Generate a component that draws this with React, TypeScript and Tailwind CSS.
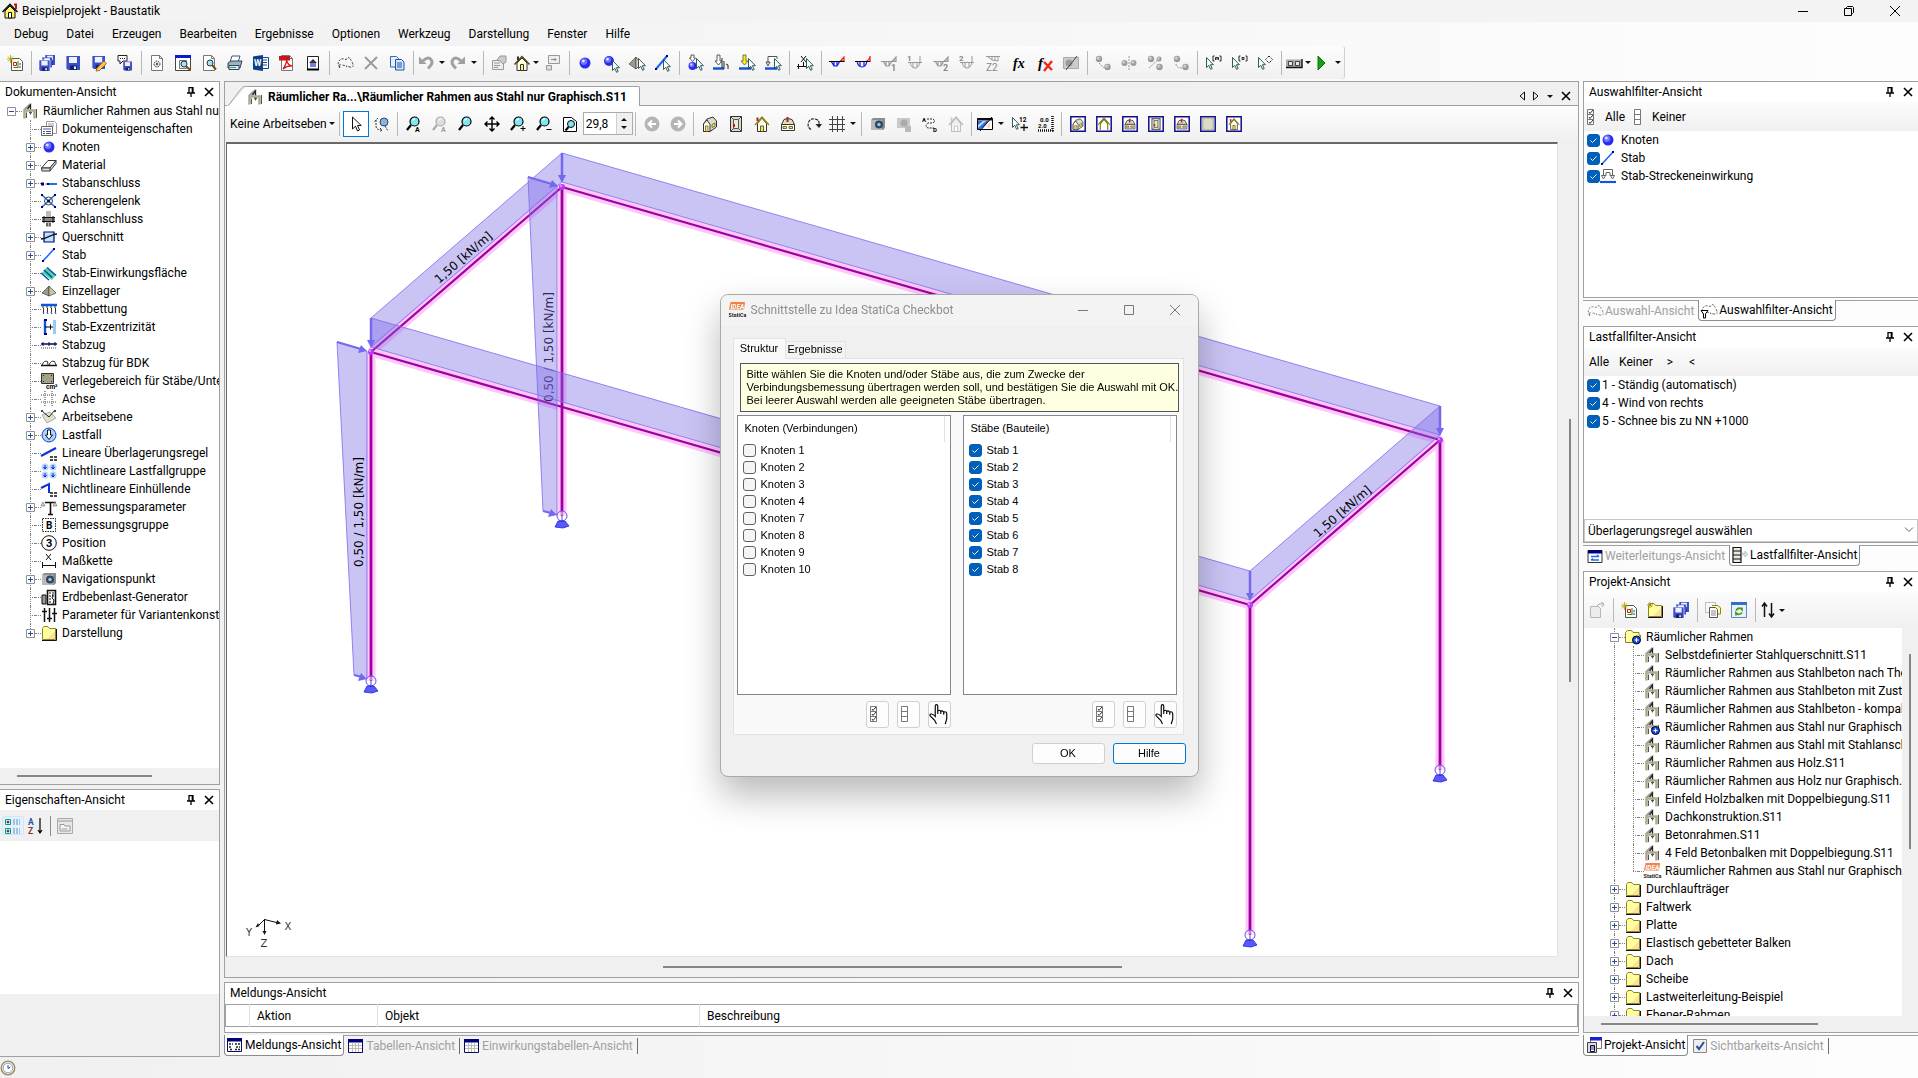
import { useState } from "react";
import type { ReactNode } from "react";

/* ---------- icon parts ---------- */

const Cursor = ({ x = 0, y = 0 }: { x?: number; y?: number }) => (
  <path
    transform={`translate(${x} ${y})`}
    d="M.5.5v10l2.300-2.200 1.800 4 1.600-.8-1.800-3.800h3z"
    fill="#fff"
    stroke="#164b4b"
    strokeWidth=".9"
  />
);

const Lens = ({ sign, off }: { sign?: ReactNode; off?: boolean }) => (
  <>
    <circle cx="8.500" cy="5.500" r="4.500" fill={off ? "#ddd" : "#7fe6f2"} stroke={off ? "#aaa" : "#000"} strokeWidth="1.200" />
    <path d="M6.500 4.500a2.500 2.500 0 0 1 2.500-1.500" stroke="#fff" strokeWidth="1.300" fill="none" />
    <path d="M5 9l-4 5" stroke={off ? "#aaa" : "#000"} strokeWidth="2.200" />
    {sign}
  </>
);

const Floppy = ({ x = 0, y = 0, s = 14 }: { x?: number; y?: number; s?: number }) => (
  <g transform={`translate(${x} ${y}) scale(${s / 14})`}>
    <path d="M0 0h14v14H2l-2-2z" fill="#3c4fc4" />
    <path d="M3 1h8v6H3z" fill="#eef1ff" />
    <path d="M4 9.500h7V14H4z" fill="#15206e" />
    <path d="M8 10.500h2V13H8z" fill="#fff" />
    <path d="M0 0h1v12H0z" fill="#8592ea" />
  </g>
);

const Ball = ({ x = 8, y = 8, r = 5.5, gray }: { x?: number; y?: number; r?: number; gray?: boolean }) => (
  <>
    <circle cx={x} cy={y} r={r} fill={gray ? "#9b9b9b" : "#2b2bf2"} />
    <circle cx={x - r * 0.2} cy={y - r * 0.25} r={r * 0.6} fill={gray ? "#b8b8b8" : "#6d74ff"} />
    <circle cx={x - r * 0.3} cy={y - r * 0.35} r={r * 0.25} fill="#e3e6ff" />
  </>
);

const Folder = () => (
  <>
    <path d="M1.500 14.500v-11l1.500-2h4l1.500 2h6v11z" fill="#ffffa0" stroke="#8c8428" />
    <path d="M6 14l8-8v8z" fill="#f7d59b" opacity=".7" />
    <path d="M1 15.500h14.500V4" stroke="#111" fill="none" />
  </>
);

const FrameModel = () => (
  <>
    <path d="M2 7L8.500 1" stroke="#9a9a9a" strokeWidth="2" fill="none" />
    <path d="M5.500 6L8.500 2v9" stroke="#222" strokeWidth="1.300" fill="none" />
    <path d="M2.500 15.500V7.500h10v8" stroke="#aeab93" strokeWidth="2.600" fill="none" />
    <path d="M4.500 15V9.500M14.500 15V6M8.500 9.500v2M7 9.500h3" stroke="#55534a" strokeWidth="1" />
  </>
);

const Page = ({ children }: { children?: ReactNode }) => (
  <>
    <path d="M2.500.5h8l3 3v12h-11z" fill="#fff" stroke="#777" />
    <path d="M10.500.5v3h3" fill="none" stroke="#777" />
    {children}
  </>
);

const House = ({ line = "#000", roof = "#000", off }: { line?: string; roof?: string; off?: boolean }) => (
  <>
    <path d="M3.500 15.500v-8L8 2l4.500 5.500v8z" fill={off ? "#f0f0f0" : "#fffde8"} stroke={line} />
    <path d="M1 9l7-8 7 8" fill="none" stroke={roof} strokeWidth="1.400" />
    <path d="M3.500 5V1.500" stroke={off ? "#ccc" : "#c01818"} strokeWidth="2" />
    <path d="M6.500 10h3v5.500h-3z" fill={off ? "#fff" : "#ffec3a"} stroke={line} strokeWidth=".8" />
  </>
);

const SideHouse = () => (
  <>
    <path d="M1.500 8.500L4 3.500q4-2 8 0l2.500 5z" fill="#dddbc8" stroke="#333" />
    <path d="M1.500 8.500h13v6h-13z" fill="#fffef0" stroke="#333" />
    <path d="M3 10.500h3.500v2H3zM9 10.500h3.500v2H9z" fill="#ffe93a" stroke="#333" strokeWidth=".7" />
    <path d="M6.500 1h2v5h-2z" fill="#b02020" />
  </>
);

const TopHouse = () => (
  <>
    <path d="M2.500.5h11v15h-11z" fill="#dddbc8" stroke="#333" />
    <path d="M5.500 3.500h5v9h-5zM2.500.5l3 3M13.500.5l-3 3M2.500 15.500l3-3M13.500 15.500l-3-3" fill="#eceadb" stroke="#555" />
    <path d="M5 8h2v3H5z" fill="#b02020" />
  </>
);

const IsoHouse = () => (
  <>
    <path d="M1.500 8L5 3l6-2 3.500 4v6L8 15.500H1.500z" fill="#dddbc8" stroke="#333" />
    <path d="M1.500 8L5 4l3 4.500v7H1.500z" fill="#fffef0" stroke="#333" />
    <path d="M3.500 10h2.500v5.500H3.500zM10 8.500l3-1.500v3l-3 1.500z" fill="#ffe93a" stroke="#333" strokeWidth=".6" />
  </>
);

const Boxed = ({ children }: { children?: ReactNode }) => (
  <>
    <path d="M.8.8h14.400v14.400H.8z" fill="#fff" stroke="#10108c" strokeWidth="1.500" />
    <g transform="translate(2 2) scale(.75)">{children}</g>
  </>
);

const Grid = ({ color = "#777" }: { color?: string }) => (
  <path d="M3.500 0v16M8.500 0v16M13.500 0v16M0 3.500h16M0 8.500h16M0 13.500h16" stroke={color} />
);

const Cables = ({ label, off }: { label?: string; off?: boolean }) => (
  <>
    <path d="M2 6l3 5h3l3-5M5 6v5M8 6v5" fill="none" stroke={off ? "#999" : "#0a16e0"} strokeWidth="1.200" />
    <path d="M11.500 6L15 2v4z" fill="none" stroke={off ? "#999" : "#f01818"} strokeWidth="1.200" />
    <path d="M0 6.500h15.500" stroke={off ? "#999" : "#000"} />
    {label && (
      <text x="10" y="15.500" fontSize="9" fontWeight="700" fill="#888">
        {label}
      </text>
    )}
  </>
);

const BallPair = ({ mid }: { mid: string }) => (
  <>
    <Ball x={4} y={4} r={3.2} gray />
    <Ball x={12.5} y={12} r={3.2} gray />
    <path d={mid} stroke="#999" fill="none" strokeDasharray="2 1" />
  </>
);

const Idea = () => (
  <>
    <path d="M1.500 0H16l-1 7.500H0z" fill="#f0834a" />
    <text x="1.500" y="6.500" fontSize="6.500" fontWeight="700" fill="#fff" fontStyle="italic">IDEA</text>
    <text x="-.5" y="14.500" fontSize="5.500" fontWeight="700" fill="#222">StatiCa</text>
  </>
);

const Checklist = ({ marks }: { marks?: boolean }) => (
  <>
    <path d="M1.500.5h6v15h-6zM1.500 5.500h6M1.500 10.500h6" fill="#fff" stroke="#777" />
    {marks && <path d="M3 3l1 1.500L7 1M3 8l1 1.500L7 6M3 13l1 1.500L7 11" stroke="#333" fill="none" />}
  </>
);

const Lasso = () => (
  <path d="M3 12q-3-3-1-6t5-2 4-1 4 4-2 5-4-1-4-1-2 3" fill="none" stroke="#333" strokeDasharray="2 1.300" />
);

const WindowGrid = ({ dots }: { dots?: boolean }) => (
  <>
    <path d="M.5 1.500h14v13H.5z" fill="#fff" stroke="#0b0b5c" />
    <path d="M0 1h15v3.500H0z" fill="#00007b" />
    {dots ? (
      <path d="M2 7h4M8 7h5M2 10h3M9 10h4M3 12.500h3M8 12.500h5" stroke="#222" strokeWidth="1.600" strokeDasharray="2 1" />
    ) : (
      <path d="M4.500 5v9M7.500 5v9M10.500 5v9M1 7.500h13M1 10.500h13" stroke="#bbb" />
    )}
  </>
);

const icons: Record<string, ReactNode> = {
  app: (
    <>
      <path d="M3 15V8l5-5 5 5v7z" fill="#fff36b" stroke="#111" />
      <path d="M.5 9L8 1.500 15.500 9" fill="none" stroke="#111" strokeWidth="1.600" />
      <path d="M12 1.500h2V6" stroke="#d01010" strokeWidth="2" fill="none" />
      <path d="M6.500 9.500h3V15h-3z" fill="#fff" stroke="#111" />
    </>
  ),
  newDoc: (
    <>
      <path d="M4.500 3.500h8l3 3v9h-11z" fill="#fffff0" stroke="#555" />
      <path d="M6.500 7.500h3v3h-3z" fill="#fff" stroke="#e01010" />
      <path d="M11 6v6M6.500 12.500h5" stroke="#1a8f1a" />
      <path d="M0 4h7M3.500 0v8M1 1.500l5 5M6 1.500l-5 5" stroke="#b5a900" strokeWidth=".9" />
      <path d="M12 9h2M12 12h2" stroke="#2a2ae0" />
    </>
  ),
  saveAll: (
    <>
      <Floppy x={6} y={0} s={10} />
      <Floppy x={3} y={2.5} s={10} />
      <Floppy x={0} y={5} s={11} />
      <path d="M0 5h11M11 5v11" stroke="#fff" strokeWidth=".6" />
    </>
  ),
  save: <Floppy x={1} y={1} />,
  saveEdit: (
    <>
      <Floppy x={1} y={1} s={13} />
      <path d="M6 13l7-7 2.500 2.500-7 7L5 16z" fill="#ffc24a" stroke="#8a5a10" strokeWidth=".8" />
    </>
  ),
  saveNote: (
    <>
      <path d="M1 .5h9v5.500H6l-3 3V6H1z" fill="#fff" stroke="#222" />
      <path d="M3 3.500h5" stroke="#222" strokeDasharray="1 1" />
      <Floppy x={6} y={6.5} s={9} />
    </>
  ),
  docGear: (
    <Page>
      <circle cx="8" cy="9" r="3" fill="#ddd" stroke="#333" strokeDasharray="1.500 1" />
      <circle cx="8" cy="9" r="1" fill="#333" />
    </Page>
  ),
  preview: (
    <>
      <path d="M.5.5h15v15H.5z" fill="#fff" stroke="#444" />
      <path d="M0 0h16v3H0z" fill="#0b17d4" />
      <path d="M4.500 5.500h7v8h-7z" fill="#eee" stroke="#777" />
      <circle cx="9" cy="9" r="3" fill="#a6e3f0" stroke="#234" />
      <path d="M11 11l4 4" stroke="#7a4d10" strokeWidth="2" />
    </>
  ),
  docFind: (
    <Page>
      <circle cx="9" cy="8" r="3" fill="#a6e3f0" stroke="#234" />
      <path d="M11 10l4 4.500" stroke="#7a4d10" strokeWidth="2" />
    </Page>
  ),
  print: (
    <>
      <path d="M5 1h8l-2 6H3z" fill="#fff" stroke="#456" />
      <path d="M1 8l3-2h11l-2 7H1z" fill="#9db4c0" stroke="#345" />
      <path d="M2 10.500h10v4H2z" fill="#e7eef2" stroke="#345" />
      <path d="M3 12.500h6" stroke="#1ba39b" />
    </>
  ),
  word: (
    <>
      <path d="M8 2.500h7.500v11H8z" fill="#fff" stroke="#124b8e" />
      <path d="M9 5h5M9 7.500h5M9 10h5" stroke="#124b8e" />
      <path d="M0 1.500L10 0v16L0 14.500z" fill="#0c3f86" />
      <text x="1" y="11" fontSize="8.500" fontWeight="700" fill="#fff">W</text>
    </>
  ),
  pdf: (
    <Page>
      <path d="M0 1h11v4.500H0z" fill="#c8141b" />
      <path d="M4 14q4-6 3.500-9Q9 11 14 11q-6-.5-10 3z" fill="none" stroke="#d11" strokeWidth="1.200" />
    </Page>
  ),
  housePage: (
    <>
      <path d="M2.500 1.500h11v13h-11z" fill="#fff" stroke="#222" />
      <path d="M4 8l4-4 4 4z" fill="#333" />
      <path d="M5 8h6v4H5z" fill="#7780e0" />
      <path d="M2 14.500h12" stroke="#000" strokeWidth="2" />
    </>
  ),
  lasso: <Lasso />,
  remove: <path d="M2 2l12 12M14 2L2 14" stroke="#999" strokeWidth="1.800" />,
  copy: (
    <>
      <path d="M1.500 1.500h6l2.500 2.500v8H1.500z" fill="#e5f0ff" stroke="#3666b5" />
      <path d="M6.500 4.500h6l2.500 2.500v8H6.500z" fill="#d4e5ff" stroke="#2352a5" />
      <path d="M8 8h5M8 10h5M8 12h5" stroke="#2352a5" />
    </>
  ),
  undo: (
    <>
      <path d="M5 6q5-5 8-1.500t-3 9" fill="none" stroke="#a0a0a0" strokeWidth="3" />
      <path d="M1 1.500V9h7.500z" fill="#a0a0a0" />
    </>
  ),
  redo: (
    <>
      <path d="M11 6Q6 1 3 4.500t3 9" fill="none" stroke="#a0a0a0" strokeWidth="3" />
      <path d="M15 1.500V9H7.500z" fill="#a0a0a0" />
    </>
  ),
  props: (
    <>
      <path d="M1.500 5.500h11v9h-11z" fill="#eee" stroke="#999" />
      <path d="M3 8h6M3 10.500h6M3 12.500h4" stroke="#999" />
      <path d="M6 5l3-4h6v6l-3 2-3-3z" fill="#ccc" stroke="#999" />
    </>
  ),
  homeOlive: (
    <>
      <path d="M3 15.500V8l5-5 5 5v7.500z" fill="#fffee6" stroke="#333" />
      <path d="M.5 9.500L8 1.500l7.500 8" fill="none" stroke="#4a4a10" strokeWidth="1.500" />
      <path d="M4 5V1.500" stroke="#333" strokeWidth="2" />
      <path d="M6.500 9.500h3v6h-3z" fill="#fff36b" stroke="#333" />
    </>
  ),
  winMini: (
    <>
      <path d="M3.500.5h11v8h-11z" fill="#eee" stroke="#999" />
      <path d="M6 4.500h5M9.500 3l1.500 1.500L9.500 6" stroke="#888" fill="none" />
      <path d="M1.500 10.500h5v4.500h-5z" fill="#ddd" stroke="#999" />
    </>
  ),
  ball: <Ball />,
  ballCursor: (
    <>
      <Ball x={6} y={6} r={5} />
      <Cursor x={9} y={5} />
    </>
  ),
  pyramid: (
    <>
      <path d="M0 9L7 2v12z" fill="#9c9b8c" stroke="#444" strokeWidth=".7" />
      <path d="M7 2l5 7-5 5z" fill="#d9d7b8" stroke="#444" strokeWidth=".7" />
      <Cursor x={9} y={3} />
    </>
  ),
  lineCursor: (
    <>
      <path d="M1 14L12 1" stroke="#1565ff" strokeWidth="2" />
      <path d="M0 13h2v2H0zM11 0h2v2h-2z" fill="#000080" />
      <Cursor x={8} y={4} />
    </>
  ),
  nodeLoad: (
    <>
      <path d="M4 0h3v3h1.500L5.500 6.500 2.500 3H4z" fill="#fff" stroke="#333" strokeWidth=".8" />
      <Ball x={5.5} y={11} r={4} />
      <Cursor x={9} y={3} />
    </>
  ),
  barLoad: (
    <>
      <path d="M4 0h3v6h2L5.500 10 2 6h2z" fill="#fff" stroke="#333" strokeWidth=".8" />
      <path d="M0 13.500h11" stroke="#1455d8" strokeWidth="2.500" />
      <path d="M9 3v10M11 6v8M13 9l2 1v4" stroke="#222" fill="none" />
    </>
  ),
  yellowLoad: (
    <>
      <path d="M4 0h3v6h2L5.500 10 2 6h2z" fill="#fff000" stroke="#555" strokeWidth=".8" />
      <path d="M0 13.500h12" stroke="#1455d8" strokeWidth="2.500" />
      <Cursor x={9} y={3} />
    </>
  ),
  lineLoad: (
    <>
      <path d="M3 8V1.500h9V4M1 7h4l-2 4z" fill="#fff" stroke="#555" />
      <path d="M0 13.500h12" stroke="#1455d8" strokeWidth="2.500" />
      <Cursor x={9} y={3} />
    </>
  ),
  dimCursor: (
    <>
      <path d="M0 11.500h12M1.500 9v5M4 1l5 6M9 1L4 7M6.500 7v4" stroke="#111" fill="none" />
      <Cursor x={9} y={3} />
    </>
  ),
  resA: <Cables />,
  resB: (
    <>
      <path d="M2 6q1 6 5 6t5-6M5 6v5M9 6v5" fill="none" stroke="#0a16e0" strokeWidth="1.200" />
      <path d="M11.500 6q3-1 3.500-5v5" fill="none" stroke="#f01818" strokeWidth="1.200" />
      <path d="M0 6.500h15.500" stroke="#000" />
    </>
  ),
  res1: <Cables label="1" off />,
  res1b: (
    <>
      <path d="M3 7q1 6 5 6t5-6V1M6 7v5M10 7v5M1 7.500h14" fill="none" stroke="#999" />
      <text x="0" y="6" fontSize="8" fontWeight="700" fill="#888">1</text>
    </>
  ),
  res2: <Cables label="2" off />,
  res2b: (
    <>
      <path d="M3 7q1 6 5 6t5-6V1M6 7v5M10 7v5M1 7.500h14" fill="none" stroke="#999" />
      <text x="0" y="6" fontSize="8" fontWeight="700" fill="#888">2</text>
    </>
  ),
  resZ: (
    <>
      <path d="M1 1.500h14M3 2l4 3 6 1V2M7 2v3M10 2v4" stroke="#999" fill="none" />
      <text x="1" y="15.500" fontSize="10" fill="#888">Z2</text>
    </>
  ),
  fx: <text x="2" y="12.500" fontSize="14" fontStyle="italic" fontWeight="700" fontFamily="Liberation Serif, serif">fx</text>,
  fxOff: (
    <>
      <text x="1" y="12.500" fontSize="15" fontStyle="italic" fontWeight="700" fontFamily="Liberation Serif, serif">f</text>
      <path d="M7 7l8 8M15 6l-8 10" stroke="#f02818" strokeWidth="2.400" />
    </>
  ),
  grayWin: (
    <>
      <path d="M.5 2.500h15v11H.5z" fill="#ccc" stroke="#aaa" />
      <circle cx="6" cy="8" r="3.500" fill="#999" />
      <path d="M3 15L14 1" stroke="#444" />
    </>
  ),
  pairA: <BallPair mid="M4 8l5 5" />,
  pairB: (
    <>
      <Ball x={3.5} y={8} r={3} gray />
      <Ball x={12.5} y={8} r={3} gray />
      <path d="M8 1v14" stroke="#999" strokeDasharray="2 1" />
    </>
  ),
  pairC: (
    <>
      <BallPair mid="M2 13L14 2" />
      <Ball x={12} y={4} r={2.5} gray />
    </>
  ),
  pairD: <BallPair mid="M3 9q0 4 6 4" />,
  pickM: (
    <>
      <Cursor x={1} y={2} />
      <path d="M9.500 1h-1.500v5h1.500M14.500 1H16v5h-1.500M10.500 5V2.500h3V5M12 3v2" stroke="#111" fill="none" strokeWidth=".9" />
    </>
  ),
  pickO: (
    <>
      <Cursor x={1} y={2} />
      <path d="M9.500 1h-1.500v5h1.500M14.500 1H16v5h-1.500M11 2.500h2v2h-2z" stroke="#111" fill="none" strokeWidth=".9" />
    </>
  ),
  pickD: (
    <>
      <Cursor x={1} y={2} />
      <path d="M12 1l3.500 3.500L12 8 8.500 4.500z" stroke="#222" fill="none" strokeDasharray="1.500 .8" />
    </>
  ),
  boxes: (
    <>
      <path d="M0 4.500h16v8H0z" fill="#aaa" />
      <path d="M2.500 6.500h4v4h-4zM9.500 6.500h4v4h-4z" fill="#e8e8e8" stroke="#222" strokeWidth=".8" />
      <path d="M0 12.500h16V4" stroke="#111" strokeWidth="1.400" fill="none" />
    </>
  ),
  play: <path d="M4 1l7 7-7 7z" fill="#18a018" stroke="#0a700a" />,
  pointer: (
    <path d="M4.500 1v12l3-2.800 2 4.800 2-1-2-4.500h3.700z" fill="#fff" stroke="#111" />
  ),
  orbit: (
    <>
      <circle cx="10" cy="6" r="4" fill="#8ab4e8" stroke="#345" />
      <path d="M11 10l3 5M2 4v6q0 4 6 4M6 12l2 2-2 2M4 2L2 4 0 6" stroke="#333" fill="none" strokeDasharray="2 1" />
    </>
  ),
  zoomA: <Lens sign={<text x="9" y="15.500" fontSize="7" fontWeight="700">A</text>} />,
  zoomAOff: <Lens off sign={<text x="9" y="15.500" fontSize="7" fontWeight="700" fill="#999">A</text>} />,
  zoom: <Lens />,
  pan: (
    <path d="M8 1v14M1 8h14M5.500 3.500L8 1l2.500 2.500M5.500 12.500L8 15l2.500-2.500M3.500 5.500L1 8l2.500 2.500M12.500 5.500L15 8l-2.500 2.500" fill="none" stroke="#000" strokeWidth="1.400" />
  ),
  zoomIn: <Lens sign={<path d="M13 10v5M10.500 12.500h5" stroke="#000" />} />,
  zoomOut: <Lens sign={<path d="M10.500 13.500h5" stroke="#000" />} />,
  zoomPage: (
    <>
      <path d="M1.500 1.500h8l5 4v10h-13z" fill="#fff" stroke="#000" />
      <circle cx="9" cy="8" r="3.500" fill="#7fe6f2" stroke="#000" />
      <path d="M6.500 11l-3 3.500" stroke="#000" strokeWidth="2" />
    </>
  ),
  back: (
    <>
      <circle cx="8" cy="8" r="7.500" fill="#b5b5b5" />
      <path d="M12 8H5M8 4.500L4.500 8 8 11.500" stroke="#fff" strokeWidth="2" fill="none" />
    </>
  ),
  forward: (
    <>
      <circle cx="8" cy="8" r="7.500" fill="#b5b5b5" />
      <path d="M4 8h7M8 4.500L11.500 8 8 11.500" stroke="#fff" strokeWidth="2" fill="none" />
    </>
  ),
  iso: <IsoHouse />,
  top: <TopHouse />,
  house: <House line="#333" roof="#8f8b10" />,
  side: <SideHouse />,
  rotate: (
    <>
      <path d="M5 13.500Q1 11 2.500 6.500T9 3t4 6" fill="none" stroke="#222" strokeWidth="1.200" strokeDasharray="3 1" />
      <path d="M9.500 8h6.500l-3 4z" fill="#222" />
    </>
  ),
  grid: <Grid color="#444" />,
  camera: (
    <>
      <path d="M1 4l2-2h12v10l-2 2H1z" fill="#8d8d8d" />
      <path d="M1 4h11v10H1z" fill="#b9b9b9" />
      <circle cx="9" cy="8.500" r="4" fill="#2e4760" />
      <circle cx="9" cy="8.500" r="1.700" fill="#9fc6e6" />
    </>
  ),
  cameraOff: (
    <>
      <path d="M1 2h13v10H1z" fill="#c9c9c9" />
      <circle cx="8" cy="7" r="3.500" fill="#aaa" />
      <path d="M9 10h6v6H9z" fill="#b9b9b9" />
    </>
  ),
  route: (
    <>
      <path d="M5 3h6q3 2 0 4H6q-4 3 0 5h6" fill="none" stroke="#222" strokeDasharray="2 1" />
      <text x="0" y="5.500" fontSize="6" fontWeight="700">A</text>
      <text x="11" y="15.500" fontSize="6" fontWeight="700">D</text>
    </>
  ),
  houseOff: <House off line="#bbb" roof="#bbb" />,
  planeView: (
    <>
      <path d="M.5 2.500h15v11H.5z" fill="#fff" stroke="#000" />
      <path d="M1 5h11L7 10.500 4 13H1z" fill="#2a6fe8" />
      <path d="M1 9l5-4h3l-8 7z" fill="#bcd8ff" />
      <path d="M0 3.500h16" stroke="#111" strokeWidth="2" />
      <path d="M3 15L15 1" stroke="#000" />
      <path d="M9 11l4-5v6z" fill="#f3d9c0" />
    </>
  ),
  pick12: (
    <>
      <Cursor x={0} y={1} />
      <text x="7" y="6" fontSize="6.500" fontWeight="700">12</text>
      <path d="M12 8v7M8.500 11.500H16" stroke="#111" strokeWidth="1.300" />
    </>
  ),
  ruler: (
    <>
      <text x="2" y="5.500" fontSize="6" fontWeight="700">0.0</text>
      <text x="0" y="12" fontSize="6" fontWeight="700">2.0</text>
      <path d="M14.500 0v14.500H0" fill="none" stroke="#111" strokeWidth="2.500" strokeDasharray="1 1" />
    </>
  ),
  vIso: <Boxed><IsoHouse /></Boxed>,
  vFront: <Boxed><path d="M3 16V8l5-6 5 6v8M0 9l8-9 8 9" fill="#fff" stroke="#7d7a10" strokeWidth="1.500" /></Boxed>,
  vSide: <Boxed><SideHouse /></Boxed>,
  vTop: <Boxed><TopHouse /></Boxed>,
  vSide2: <Boxed><SideHouse /></Boxed>,
  vBlank: <Boxed><path d="M1 0h14v16H1z" fill="#dddbc8" stroke="#8a8978" /></Boxed>,
  vHouse: <Boxed><House line="#333" roof="#7d7a10" /></Boxed>,
  frame: <FrameModel />,
  frameActive: (
    <>
      <FrameModel />
      <circle cx="11.500" cy="11.500" r="4" fill="#1b4ff0" stroke="#000" />
      <path d="M9.500 11.500h4M11.500 9.500v4" stroke="#fff" />
    </>
  ),
  idea: <Idea />,
  folder: <Folder />,
  folderActive: (
    <>
      <path d="M.5 13.500v-10l2-2h4l1.500 2h6v3H16l-3 7z" fill="#ffff9c" stroke="#8c8428" />
      <circle cx="11.500" cy="11" r="4" fill="#1b4ff0" stroke="#000" />
      <path d="M9.500 11h4M11.500 9v4" stroke="#fff" />
    </>
  ),
  docProps: (
    <>
      <path d="M5.500.5h8l2 2v10h-10z" fill="#fff" stroke="#999" />
      <path d="M7 3h6M7 5h6" stroke="#999" />
      <path d="M.5 5.500h11v9H.5z" fill="#fff" stroke="#666" />
      <path d="M2 8h8M2 10.500h2M5 10.500h5M2 12.500h2M5 12.500h5" stroke="#4a5a90" />
    </>
  ),
  eraser: (
    <>
      <path d="M.5 11L7 3.500h8L9 11z" fill="#fff" stroke="#333" />
      <path d="M.5 11h8.500v3H1zM9 11l6-7.500v3L9 14" fill="#ddd" stroke="#333" />
    </>
  ),
  joint: (
    <>
      <path d="M6 9h10" stroke="#1278e8" strokeWidth="2" />
      <path d="M0 7.500h3v3H0zM4.500 8.500h1v1h-1zM6 8h2v2H6z" fill="#00006e" />
    </>
  ),
  scissor: (
    <>
      <path d="M1 2l13 12M14 2L1 14" stroke="#1a6fe0" strokeWidth="1.500" />
      <circle cx="7.500" cy="8" r="4" fill="none" stroke="#444" />
      <circle cx="7.500" cy="8" r="1.500" fill="#111" />
      <path d="M0 1h2v2H0zM13 1h2v2h-2zM0 13h2v2H0zM13 13h2v2h-2z" fill="#00006e" />
    </>
  ),
  steelJoint: (
    <>
      <path d="M5 0h5v16H5z" fill="#bbb" />
      <path d="M1 6.500h13v4H1z" fill="#888" />
      <path d="M1 6.500h13M1 10.500h13M3 5v7M12 5v7M6 12v3M9 12v3" stroke="#111" />
    </>
  ),
  section: (
    <>
      <path d="M3 3h10v10H3z" fill="#bfe2fb" stroke="#00007b" strokeWidth="1.200" />
      <path d="M0 10l3-.5 10-4 3-.5" stroke="#111" fill="none" strokeWidth="1.300" />
    </>
  ),
  bar: (
    <>
      <path d="M2 14L13 2" stroke="#1565ff" strokeWidth="1.500" />
      <path d="M1 13h2v2H1zM12 1h2v2h-2z" fill="#000080" />
    </>
  ),
  loadArea: (
    <>
      <path d="M1 8l4-5 10 7-4 5z" fill="#46dba0" />
      <path d="M0 8l8 7M3 5l8 7.500M6 2.500l9 8" stroke="#1244b0" strokeWidth="1.500" />
    </>
  ),
  support: (
    <>
      <path d="M1 10L8 3v10z" fill="#9c9b8c" stroke="#444" strokeWidth=".7" />
      <path d="M8 3l7 7-7 3z" fill="#c9c6a0" stroke="#444" strokeWidth=".7" />
    </>
  ),
  bedding: (
    <>
      <path d="M0 4h16" stroke="#1256d8" strokeWidth="2.500" />
      <path d="M2 5v2l1 1-1 1 1 1-1 1 1 2M6 5v2l1 1-1 1 1 1-1 1 1 2M10 5v2l1 1-1 1 1 1-1 1 1 2M14 5v2l1 1-1 1 1 1-1 1 1 2" stroke="#333" fill="none" />
    </>
  ),
  eccentric: (
    <>
      <path d="M4 1v14" stroke="#1256d8" strokeWidth="2.400" />
      <path d="M12 1h3v14h-3z" fill="#9cc8f4" />
      <path d="M4 8h8M9.500 5.500v5" stroke="#000" />
      <path d="M3 0h3v2H3zM3 14h3v2H3z" fill="#00006e" />
    </>
  ),
  barChain: (
    <>
      <path d="M0 7h16" stroke="#00007b" strokeWidth="1.500" />
      <path d="M2 5v4M8 5v4M14 5v4" stroke="#111" />
      <path d="M0 11h16" stroke="#888" strokeWidth="1.500" strokeDasharray="1 1" />
    </>
  ),
  barChainBdk: (
    <>
      <path d="M0 10.500h16" stroke="#111" strokeWidth="1.500" />
      <path d="M1 10q2-5 5.500-3.500L7 10M8 10q2-5 5.500-3.500L15 10" stroke="#333" fill="none" />
    </>
  ),
  layArea: (
    <>
      <path d="M.5.5h12v10H.5z" fill="#a3a38a" stroke="#333" />
      <path d="M2 2h1v1H2zM10 2h1v1h-1zM2 8h1v1H2zM10 8h1v1h-1z" fill="#222" />
      <text x="5" y="16" fontSize="6.500" fontWeight="700">cm²</text>
    </>
  ),
  axis: (
    <path d="M4 0v16M11 0v16M0 4h16M0 11h16" fill="none" stroke="#888" strokeWidth="1.600" strokeDasharray="1 1" />
  ),
  workPlane: (
    <>
      <path d="M1 6l8-3 6 6-9 5z" fill="#e2e0cc" stroke="#aaa" />
      <path d="M1 2l7 6 6-7" fill="none" stroke="#222" />
      <path d="M0 1h2v2H0zM13 1h2v2h-2z" fill="#444" />
    </>
  ),
  loadCase: (
    <>
      <circle cx="8" cy="8" r="7" fill="#a8d4fa" stroke="#1440d8" />
      <path d="M6.500 3h3v5h2L8 12.500 4.500 8h2z" fill="#fff" stroke="#111" />
    </>
  ),
  linearRule: (
    <>
      <path d="M0 11L15 3" stroke="#1030e0" strokeWidth="2" />
      <path d="M9 12h3M13 12h3M9 15h3M13 15h3" stroke="#111" strokeWidth="1.500" />
    </>
  ),
  caseGroup: (
    <>
      <circle cx="4" cy="4" r="3.500" fill="#b4d6fa" />
      <circle cx="12" cy="4" r="3.500" fill="#b4d6fa" />
      <circle cx="4" cy="12" r="3.500" fill="#b4d6fa" />
      <circle cx="12" cy="12" r="3.500" fill="#b4d6fa" />
      <path d="M4 2v4M12 2v4M4 10v4M12 10v4M2.500 4L4 6l1.500-2M10.500 4L12 6l1.500-2M2.500 12L4 14l1.500-2M10.500 12l1.500 2 1.500-2" fill="none" stroke="#1020d0" />
    </>
  ),
  envelope: (
    <>
      <path d="M0 7l8-4v9" fill="none" stroke="#1030e0" strokeWidth="2" />
      <path d="M9 12h3M13 12h3M9 15h3M13 15h3" stroke="#111" strokeWidth="1.500" />
    </>
  ),
  scale: (
    <>
      <path d="M4 3.500h11M9.500 3v12M7 15.500h5" stroke="#111" strokeWidth="1.600" />
      <path d="M0 7l2-4 2 4zM12 7l2-4 2 4z" fill="#ddd8b0" stroke="#777" strokeWidth=".7" />
    </>
  ),
  groupB: (
    <>
      <path d="M1.500 1.500h13v13h-13z" fill="#fff" stroke="#222" strokeDasharray="1.500 1" />
      <text x="5" y="12" fontSize="10" fontWeight="700">B</text>
    </>
  ),
  position: (
    <>
      <circle cx="8" cy="8" r="7.300" fill="#fff" stroke="#111" />
      <text x="5" y="12" fontSize="11" fontWeight="700">3</text>
    </>
  ),
  dimChain: <path d="M1 12.500h14M1.500 9v6M14.500 9v6M5 1l5 6M10 1L5 7" fill="none" stroke="#111" />,
  quake: (
    <>
      <path d="M6.500 1.500h8v14h-8z" fill="#fff" stroke="#111" strokeWidth="1.600" />
      <path d="M1 6h4v9H1zM8 4h2M11 4h2M8 7h2M11 7h2M8 10h2M8 13h2" fill="#999" stroke="#111" />
      <path d="M12 5l-1 4 2 2-1 4" stroke="#111" fill="none" />
    </>
  ),
  sliders: <path d="M3.500 1v14M8.500 1v14M13.500 1v14M1 4.500h5M6 11.500h5M11 6.500h5" stroke="#111" strokeWidth="1.500" />,
  catView: (
    <>
      <path d="M.5 1.500h5v5h-5zM.5 10.500h5v5h-5z" fill="#fff" stroke="#0a9a86" />
      <path d="M1.500 4h3M3 2.500v3M1.500 13h3M3 11.500v3" stroke="#111" />
      <path d="M8 2h7M8 4h7M8 6h7M8 11h7M8 13h7M8 15h7" stroke="#5c93c8" strokeDasharray="2 1" />
    </>
  ),
  sortAz: (
    <>
      <text x="0" y="7" fontSize="8.500" fontWeight="700" fill="#1b58b8">A</text>
      <text x="0" y="16" fontSize="8.500" fontWeight="700" fill="#8b3030">Z</text>
      <path d="M12 0v14M10 12l2 3 2-3" stroke="#000" fill="none" strokeWidth="1.200" />
    </>
  ),
  propPages: (
    <>
      <path d="M.5.5h15v15H.5z" fill="#e6e6e6" stroke="#aaa" />
      <path d="M1 3h14M3 6.500h4l1 1.500h5v5H3z" stroke="#999" fill="#f5f5f5" />
      <path d="M4.500 11h6" stroke="#999" />
    </>
  ),
  msgTab: <WindowGrid dots />,
  tableTab: <WindowGrid />,
  all: <Checklist marks />,
  none: <Checklist />,
  barLineLoad: (
    <>
      <path d="M3.500 8V1.500h9V8M1.500 7.500h4L3.500 11zM10.500 7.500h4l-2 3.500zM6 8V4.500h4V8" fill="#fff" stroke="#666" />
      <path d="M0 14h16" stroke="#1456d8" strokeWidth="2.200" />
    </>
  ),
  lassoTab: <g opacity=".6"><Lasso /></g>,
  lassoFilter: (
    <>
      <g opacity=".8"><Lasso /></g>
      <path d="M0 8.500h7L4.500 12v4h-2v-4z" fill="#fff" stroke="#000" />
    </>
  ),
  forwardTab: (
    <>
      <path d="M1 2.500h14v12H1z" fill="#fff" stroke="#333" />
      <path d="M1 2h14v3.500H1z" fill="#00007b" />
      <path d="M4 8.500h8M10 7l2 1.500M12 12H4M6 10.500L4 12" stroke="#1a6fe8" strokeWidth="1.400" fill="none" />
    </>
  ),
  caseTab: (
    <>
      <path d="M1 .5h8v15H1zM1 4h8M1 8h8M1 12h8" fill="#eceadb" stroke="#111" strokeWidth="1.200" />
      <path d="M10 6h3V4l3 3-3 3V8h-3z" fill="#cfe6e6" stroke="#9bb" strokeWidth=".6" />
    </>
  ),
  projTab: (
    <>
      <path d="M4.500.5h11v11h-11z" fill="#fff" stroke="#777" />
      <path d="M4 0h12v3.500H4z" fill="#1624d0" />
      <path d="M1.500 5.500h9v10h-9z" fill="#ddd" stroke="#444" />
      <path d="M4.500 8.500h4v6h-4z" fill="#fff" stroke="#111" />
      <path d="M5 10h3M5 12h3" stroke="#1624d0" />
    </>
  ),
  checkTab: (
    <>
      <path d="M1.500 1.500h13v13h-13z" fill="#eee" stroke="#888" />
      <path d="M4.500 8l2.500 3 5-7" stroke="#2b4f9e" strokeWidth="2" fill="none" />
    </>
  ),
  exportOff: (
    <>
      <path d="M1.500 4.500h8l2 2v9h-10z" fill="#ececec" stroke="#b5b5b5" />
      <path d="M8 4q1-3 6-2M12 0l3 2-2 3" fill="none" stroke="#aaa" />
    </>
  ),
  newFolder: (
    <>
      <Folder />
      <path d="M0 3h6M3 0v6M1 1l4 4M5 1L1 5" stroke="#9a8f00" strokeWidth=".8" />
    </>
  ),
  copyDocs: (
    <>
      <path d="M.5.5h10v10H.5z" fill="none" stroke="#888" strokeDasharray="1 1" />
      <path d="M7 3.500h6l2.500 2.500v6H13" fill="#ffff9c" stroke="#8c8428" />
      <path d="M4.500 5.500h6l2 2v8h-8z" fill="#fff" stroke="#555" />
      <path d="M6 9h5M6 11h5M6 13h5" stroke="#888" />
    </>
  ),
  refreshWin: (
    <>
      <path d="M.5.5h15v15H.5z" fill="#e8f2fc" stroke="#5a8ac0" />
      <path d="M0 0h16v3H0z" fill="#2f6fd0" />
      <path d="M5 8.500Q8 4.500 11 7.500V5.500M11 10.500Q8 14 5 11v2.500" fill="none" stroke="#4d9a10" strokeWidth="1.800" />
    </>
  ),
  sortArrows: <path d="M4.500 15V2M2 4.500L4.500 1 7 4.500M11.500 1v13M9 11.500l2.500 3.500 2.500-3.500" fill="none" stroke="#111" strokeWidth="1.500" />,
  clock: (
    <>
      <circle cx="8" cy="8" r="6.800" fill="#e8f0fa" stroke="#a08850" strokeWidth="1.300" />
      <circle cx="8" cy="8" r="4.800" fill="#fff" stroke="#8aa4cc" />
      <path d="M8 5v3.500L10.500 7" stroke="#35507c" fill="none" />
    </>
  ),
  hand: (
    <>
      <path
        d="M5 10V1.800Q5 .5 6 .5t1 1.300V6q.2-1 1.200-1t1.200 1.300q.2-1 1.200-.8t1.200 1.500q.2-1 1.200-.8t1.200 1.500V12L13 16H6.500L4.500 13 1 9.500q-.6-1.200.6-1.500T5 10z"
        fill="#fff"
      />
      <path
        d="M7 8V1.800Q7 .5 6 .5T5 1.800V10Q3 7.700 1.600 8T1 9.500L4.500 13l1.500 3M7 6q.2-1 1.200-1t1.200 1.300V8M9.400 6.300q.2-1 1.200-.8t1.200 1.500v1.500M11.800 7q.2-1 1.200-.8t1.200 1.500V12L13 16"
        fill="none"
        stroke="#000"
        strokeWidth=".9"
      />
    </>
  ),
};

const Icon = ({ name, big }: { name: string; big?: boolean }) => (
  <svg viewBox="0 0 16 16" className={`shrink-0 overflow-visible ${big ? "size-5" : "size-4"}`} aria-hidden="true">
    {icons[name]}
  </svg>
);

/* ---------- small building blocks ---------- */

const Caret = () => (
  <svg viewBox="0 0 6 3" className="h-[3px] w-[6px] shrink-0" aria-hidden="true">
    <path d="M0 0h6L3 3z" fill="#111" />
  </svg>
);

const Sep = () => (
  <span className="flex w-1.5 shrink-0 justify-center">
    <span className="h-6 w-px bg-[#b9b9b9]" />
  </span>
);

const ToolButton = ({ name, active }: { name: string; active?: boolean }) => (
  <button
    type="button"
    aria-label={name}
    className={`flex h-[26px] w-[26px] shrink-0 items-center justify-center ${active ? "border border-[#0078d7] bg-white" : ""}`}
  >
    <Icon name={name} />
  </button>
);

const SplitButton = ({ name, narrow }: { name: string; narrow?: boolean }) => (
  <button type="button" aria-label={name} className={`flex h-[26px] shrink-0 items-center ${narrow ? "w-7" : "w-8"}`}>
    <span className="flex w-5 justify-center">
      <Icon name={name} />
    </span>
    <span className="flex flex-1 justify-center">
      <Caret />
    </span>
  </button>
);

// "|" is a separator, a trailing "+" a drop-down and "-" a tight drop-down
const renderTools = (items: string[]) =>
  items.map((item, i) => {
    if (item === "|") return <Sep key={i} />;
    if (item.endsWith("+")) return <SplitButton key={i} name={item.slice(0, -1)} />;
    if (item.endsWith("-")) return <SplitButton key={i} name={item.slice(0, -1)} narrow />;
    return <ToolButton key={i} name={item} active={item === "pointer"} />;
  });

const CheckBox = ({ id, on }: { id: string; on: boolean }) => {
  const [checked, setChecked] = useState(on);
  return (
    <span className="relative size-[13px] shrink-0">
      <input
        id={id}
        type="checkbox"
        checked={checked}
        onChange={() => setChecked(!checked)}
        className="block size-[13px] appearance-none rounded-[3px] border border-[#626262] bg-[#f5f5f5] checked:border-[#005fb8] checked:bg-[#005fb8]"
      />
      {checked && (
        <svg viewBox="0 0 13 13" className="pointer-events-none absolute inset-0 size-[13px]" aria-hidden="true">
          <path d="M3.500 6.500l2 2 4-4" fill="none" stroke="#fff" />
        </svg>
      )}
    </span>
  );
};

const PinClose = ({ pin = true }: { pin?: boolean }) => (
  <span className="flex items-center gap-2">
    {pin && (
      <button type="button" aria-label="Anheften">
        <svg viewBox="0 0 10 10" className="size-[10px]">
          <path d="M3 6V.7h4V6M6.300.5V6M1 6h8M5 6v4" fill="none" stroke="#000" strokeWidth="1.300" />
        </svg>
      </button>
    )}
    <button type="button" aria-label="Schließen">
      <svg viewBox="0 0 10 10" className="size-[10px]">
        <path d="M1 1l8 8M9 1L1 9" stroke="#000" strokeWidth="1.600" />
      </svg>
    </button>
  </span>
);

const PanelTitle = ({ children }: { children: ReactNode }) => (
  <div className="flex h-5 shrink-0 items-center justify-between bg-white pr-[5px] pl-[5px]">
    <h2>{children}</h2>
    <PinClose />
  </div>
);

type Tab = { label: string; icon: string; active?: boolean };

const DockTabs = ({ tabs }: { tabs: Tab[] }) => (
  <div role="tablist" className="mt-0.5 flex h-[21px] shrink-0">
    {tabs.map((t) => (
      <button
        key={t.label}
        type="button"
        role="tab"
        aria-selected={!!t.active}
        className={`flex items-center gap-0.5 ${
          t.active
            ? "rounded-b border border-t-0 border-[#8c8c8c] bg-white px-0.5 text-black"
            : "border-t border-[#a0a0a0] pl-1 text-[#a0a0a0] after:ml-0.5 after:h-4 after:w-px after:bg-[#6d6d6d] has-[+[aria-selected=true]]:pr-1 has-[+[aria-selected=true]]:after:hidden"
        }`}
      >
        <Icon name={t.icon} />
        {t.label}
      </button>
    ))}
    <div className="flex-1 border-t border-[#a0a0a0]" />
  </div>
);

/* ---------- trees ---------- */

type Node = { label: string; icon: string; level: number; exp?: "+" | "-"; guide?: boolean; last?: boolean };

const TreeRow = ({ node }: { node: Node }) => (
  <li className="flex h-[18px] shrink-0 items-center pl-[7px]">
    {Array.from({ length: node.level }, (_, i) => (
      <span key={i} className="flex h-full w-[19px] shrink-0 pl-1">
        {node.guide && i === node.level - 1 && <span className="w-px border-l border-dotted border-[#808080]" />}
      </span>
    ))}
    <span className="relative flex h-full w-[9px] shrink-0 items-center">
      {node.level > 0 && (
        <span className={`absolute top-0 left-1 border-l border-dotted border-[#808080] ${node.last ? "h-1/2" : "h-full"}`} />
      )}
      {node.exp ? (
        <svg viewBox="0 0 9 9" className="relative size-[9px]" aria-hidden="true">
          <path d="M.5.5h8v8h-8z" fill="#fff" stroke="#919191" />
          <path d={node.exp === "+" ? "M2 4.500h5M4.500 2v5" : "M2 4.500h5"} stroke="#2a4a9c" />
        </svg>
      ) : (
        <span className="ml-1 w-[5px] border-t border-dotted border-[#808080]" />
      )}
    </span>
    <span className="w-1.5 shrink-0 border-t border-dotted border-[#808080]" />
    <Icon name={node.icon} />
    <span className="ml-[5px]">{node.label}</span>
  </li>
);

const leaf = (label: string, icon: string, exp?: "+" | "-"): Node => ({ label, icon, exp, level: 1 });

const documentTree: Node[] = [
  { label: "Räumlicher Rahmen aus Stahl nur Graphisch", icon: "frame", level: 0, exp: "-" },
  leaf("Dokumenteigenschaften", "docProps"),
  leaf("Knoten", "ball", "+"),
  leaf("Material", "eraser", "+"),
  leaf("Stabanschluss", "joint", "+"),
  leaf("Scherengelenk", "scissor"),
  leaf("Stahlanschluss", "steelJoint"),
  leaf("Querschnitt", "section", "+"),
  leaf("Stab", "bar", "+"),
  leaf("Stab-Einwirkungsfläche", "loadArea"),
  leaf("Einzellager", "support", "+"),
  leaf("Stabbettung", "bedding"),
  leaf("Stab-Exzentrizität", "eccentric"),
  leaf("Stabzug", "barChain"),
  leaf("Stabzug für BDK", "barChainBdk"),
  leaf("Verlegebereich für Stäbe/Unterzüge", "layArea"),
  leaf("Achse", "axis"),
  leaf("Arbeitsebene", "workPlane", "+"),
  leaf("Lastfall", "loadCase", "+"),
  leaf("Lineare Überlagerungsregel", "linearRule"),
  leaf("Nichtlineare Lastfallgruppe", "caseGroup"),
  leaf("Nichtlineare Einhüllende", "envelope"),
  leaf("Bemessungsparameter", "scale", "+"),
  leaf("Bemessungsgruppe", "groupB"),
  leaf("Position", "position"),
  leaf("Maßkette", "dimChain"),
  leaf("Navigationspunkt", "camera", "+"),
  leaf("Erdbebenlast-Generator", "quake"),
  leaf("Parameter für Variantenkonstruktion", "sliders"),
  { ...leaf("Darstellung", "folder", "+"), last: true },
];

const projectFiles: [string, string][] = [
  ["Selbstdefinierter Stahlquerschnitt.S11", "frame"],
  ["Räumlicher Rahmen aus Stahlbeton nach Theorie II.S11", "frame"],
  ["Räumlicher Rahmen aus Stahlbeton mit Zustand II.S11", "frame"],
  ["Räumlicher Rahmen aus Stahlbeton - kompakt.S11", "frame"],
  ["Räumlicher Rahmen aus Stahl nur Graphisch.S11", "frameActive"],
  ["Räumlicher Rahmen aus Stahl mit Stahlanschluss.S11", "frame"],
  ["Räumlicher Rahmen aus Holz.S11", "frame"],
  ["Räumlicher Rahmen aus Holz nur Graphisch.S11", "frame"],
  ["Einfeld Holzbalken mit Doppelbiegung.S11", "frame"],
  ["Dachkonstruktion.S11", "frame"],
  ["Betonrahmen.S11", "frame"],
  ["4 Feld Betonbalken mit Doppelbiegung.S11", "frame"],
  ["Räumlicher Rahmen aus Stahl nur Graphisch.ideaCon", "idea"],
];

const projectTree: Node[] = [
  leaf("Räumlicher Rahmen", "folderActive", "-"),
  ...projectFiles.map(([label, icon], i) => ({
    label,
    icon,
    level: 2,
    guide: true,
    last: i === projectFiles.length - 1,
  })),
  ...["Durchlaufträger", "Faltwerk", "Platte", "Elastisch gebetteter Balken", "Dach", "Scheibe", "Lastweiterleitung-Beispiel", "Ebener-Rahmen"].map(
    (label) => leaf(label, "folder", "+")
  ),
];

/* ---------- toolbars ---------- */

const menus = ["Debug", "Datei", "Erzeugen", "Bearbeiten", "Ergebnisse", "Optionen", "Werkzeug", "Darstellung", "Fenster", "Hilfe"];

const mainTools = [
  "newDoc", "|", "saveAll", "save", "saveEdit", "saveNote", "|",
  "docGear", "preview", "docFind", "print", "word", "pdf", "housePage", "|",
  "lasso", "remove", "copy", "|", "undo+", "redo+", "|",
  "props", "homeOlive-", "winMini", "|",
  "ball", "ballCursor", "pyramid", "lineCursor", "|",
  "nodeLoad", "barLoad", "yellowLoad", "lineLoad", "|", "dimCursor", "|",
  "resA", "resB", "res1", "res1b", "res2", "res2b", "resZ", "fx", "fxOff", "grayWin", "|",
  "pairA", "pairB", "pairC", "pairD", "|", "pickM", "pickO", "pickD", "|", "boxes-", "play+",
];

const viewTools = [
  "|", "back", "forward", "|", "iso", "top", "house", "side", "rotate", "grid+", "|",
  "camera", "cameraOff", "route", "houseOff", "|", "planeView+", "pick12", "ruler", "|",
  "vIso", "vFront", "vSide", "vTop", "vSide2", "vBlank", "vHouse",
];

/* ---------- 3D model ---------- */

type Pt = [number, number];
const pts = (list: Pt[]) => list.map((p) => p.join(",")).join(" ");

// top corners of the frame
const A: Pt = [562, 187];
const B: Pt = [371, 352];
const C: Pt = [1440, 440];
const D: Pt = [1250, 605];

const beams: [Pt, Pt][] = [[A, B], [A, C], [B, D], [C, D]];
const columns: [Pt, number][] = [[A, 516], [B, 681], [C, 770], [D, 935]];

const Model = () => (
  <svg viewBox="227 144 1330 812" className="block size-full" fontFamily="DejaVu Sans, sans-serif" fontSize="12">
    <g stroke="#ffc8fb" strokeWidth="9">
      {beams.map(([p, q], i) => (
        <line key={i} x1={p[0]} y1={p[1]} x2={q[0]} y2={q[1]} />
      ))}
      {columns.map(([p, y], i) => (
        <line key={i} x1={p[0]} y1={p[1]} x2={p[0]} y2={y} />
      ))}
    </g>
    <g stroke="#a000a0" strokeWidth="2.200">
      {beams.map(([p, q], i) => (
        <line key={i} x1={p[0]} y1={p[1]} x2={q[0]} y2={q[1]} />
      ))}
      {columns.map(([p, y], i) => (
        <line key={i} x1={p[0]} y1={p[1]} x2={p[0]} y2={y} strokeWidth="2.800" />
      ))}
    </g>
    <text transform="translate(553 402) rotate(-90)">0,50 / 1,50 [kN/m]</text>
    <g fill="#7a6be6" fillOpacity=".4" stroke="#7a6bee" strokeOpacity=".8">
      {beams.map(([p, q], i) => (
        <polygon
          key={i}
          points={pts([[p[0], p[1] - 34], [q[0], q[1] - 34], [q[0], q[1] - 5], [p[0], p[1] - 5]])}
        />
      ))}
      <polygon points="337,342 367,351 367,679 354,675" />
      <polygon points="528,177 557,186 557,515 543,511" />
    </g>
    {/* load arrows */}
    <g fill="#7468ee" stroke="#7468ee">
      {[A, B, C, D].map(([x, y], i) => (
        <g key={i}>
          <path d={`M${x} ${y - 34}v24`} strokeWidth="2.500" />
          <path d={`M${x - 4} ${y - 12}h8l-4 8z`} stroke="none" />
        </g>
      ))}
      <path d="M337 342l24 7M528 177l24 7M354 675l8 2M543 511l8 2" strokeWidth="2.200" />
      <path d="M361 345l6 6-9 2zM552 180l6 6-9 2zM361 673l6 6-9 2zM551 509l6 6-9 2z" stroke="none" />
    </g>
    {[A, B, C, D].map(([x, y], i) => (
      <g key={i}>
        <circle cx={x} cy={y} r="3" fill="#b53df5" />
        <circle cx={x - 1} cy={y - 1} r="1" fill="#e8a8ff" />
      </g>
    ))}
    {/* supports */}
    {columns.map(([[x], y], i) => (
      <g key={i}>
        <circle cx={x} cy={y} r="5" fill="#fff" fillOpacity=".5" stroke="#6a4af5" />
        <path d={`M${x - 4} ${y + 5}h7l4 5-6 2-8-1z`} fill="#5a5af8" stroke="#2020e0" strokeWidth=".8" />
        <path d={`M${x} ${y - 1}v7`} stroke="#2020c0" strokeWidth=".8" />
      </g>
    ))}
    <text transform="translate(363 567) rotate(-90)">0,50 / 1,50 [kN/m]</text>
    <text transform="translate(439 284) rotate(-41)">1,50 [kN/m]</text>
    <text transform="translate(1318 538) rotate(-41)">1,50 [kN/m]</text>
    {/* axes */}
    <g stroke="#111" fill="#111" strokeWidth="1">
      <path d="M264.500 919.500l14 3.500M264.500 919.500l-7 7M264.500 919v13" fill="none" />
      <path d="M277 920l4 3.500-5 1zM258 923l1.500 3-4 1.500zM262.500 931h4l-2 4z" stroke="none" />
    </g>
    <g fontSize="10" textAnchor="middle" fill="#333">
      <text x="288" y="930">X</text>
      <text x="249" y="936">Y</text>
      <text x="264" y="947">Z</text>
    </g>
  </svg>
);

/* ---------- dialog ---------- */

const SelectionList = ({ title, items, on }: { title: string; items: string[]; on: boolean }) => (
  <section className="flex flex-col">
    <div className="h-[280px] w-[214px] border border-[#828790] bg-white">
      <div className="mr-[5px] flex h-[26px] items-center border-r border-[#e0e0e0] pl-[7px]">
        <h3>{title}</h3>
      </div>
      <ul>
        {items.map((item) => (
          <li key={item} className="flex h-[17px] items-center gap-[5px] pl-[5px]">
            <CheckBox id={item} on={on} />
            <label htmlFor={item}>{item}</label>
          </li>
        ))}
      </ul>
    </div>
    <div className="mt-1.5 flex justify-end gap-2">
      <button type="button" aria-label="Alle" className="flex h-[27px] w-[23px] items-center rounded-[3px] border border-[#d0d0d0] bg-[#fdfdfd] pl-0.5">
        <Icon name="all" />
      </button>
      <button type="button" aria-label="Keine" className="flex h-[27px] w-[23px] items-center rounded-[3px] border border-[#d0d0d0] bg-[#fdfdfd] pl-0.5">
        <Icon name="none" />
      </button>
      <button type="button" aria-label="Auswählen" className="flex h-[27px] w-[23px] items-center justify-center rounded-[3px] border border-[#d0d0d0] bg-[#fdfdfd]">
        <Icon name="hand" big />
      </button>
    </div>
  </section>
);

const nodeItems = [1, 2, 3, 4, 7, 8, 9, 10].map((n) => `Knoten ${n}`);
const barItems = [1, 2, 3, 4, 5, 6, 7, 8].map((n) => `Stab ${n}`);

const CheckbotDialog = () => (
  <div className="fixed inset-0 flex items-center justify-center pb-2">
    <div
      role="dialog"
      aria-labelledby="dialog-title"
      className="w-[479px] overflow-hidden rounded-lg border border-[#a9a9a9] bg-[#f0f0f0] font-['Liberation_Sans',sans-serif] text-[11px] shadow-[0_18px_36px_rgba(0,0,0,0.28)]"
    >
      <div className="flex h-[31px] items-center bg-[#f3f3f3] pl-2 font-['Roboto',sans-serif] text-xs text-[#8e8e8e]">
        <Icon name="idea" />
        <h1 id="dialog-title" className="ml-1.5 flex-1">Schnittstelle zu Idea StatiCa Checkbot</h1>
        <div className="flex text-[#777]">
          <button type="button" aria-label="Minimieren" className="flex w-[46px] justify-center">
            <svg viewBox="0 0 10 10" className="size-[10px]"><path d="M0 5.500h10" stroke="currentColor" /></svg>
          </button>
          <button type="button" aria-label="Maximieren" className="flex w-[46px] justify-center">
            <svg viewBox="0 0 10 10" className="size-[10px]"><path d="M.5.5h9v9h-9z" fill="none" stroke="currentColor" /></svg>
          </button>
          <button type="button" aria-label="Schließen" className="flex w-[46px] justify-center">
            <svg viewBox="0 0 10 10" className="size-[10px]"><path d="M0 0l10 10M10 0L0 10" stroke="currentColor" /></svg>
          </button>
        </div>
      </div>
      <div className="px-3 pt-3">
        <div role="tablist" className="flex h-5 items-end">
          <button type="button" role="tab" aria-selected="true" className="-mb-px h-[21px] w-[53px] border border-b-0 border-[#e3e3e3] bg-[#f9f9f9]">
            Struktur
          </button>
          <button type="button" role="tab" aria-selected="false" className="h-[17px] w-[60px] border border-b-0 border-l-0 border-[#e3e3e3] bg-[#f3f3f3]">
            Ergebnisse
          </button>
        </div>
        <div className="w-[451px] border border-[#e3e3e3] bg-[#f9f9f9] px-[3px] pt-1 pb-1.5">
          <p className="ml-[3px] w-[439px] border border-[#555] bg-[#ffffe1] px-1.5 pt-1 pb-1 leading-[13px] whitespace-nowrap">
            Bitte wählen Sie die Knoten und/oder Stäbe aus, die zum Zwecke der
            <br />
            Verbindungsbemessung übertragen werden soll, und bestätigen Sie die Auswahl mit OK.
            <br />
            Bei leerer Auswahl werden alle geeigneten Stäbe übertragen.
          </p>
          <div className="mt-[3px] flex gap-3">
            <SelectionList title="Knoten (Verbindungen)" items={nodeItems} on={false} />
            <SelectionList title="Stäbe (Bauteile)" items={barItems} on />
          </div>
        </div>
      </div>
      <div className="flex justify-end gap-2 px-3 pt-2 pb-3">
        <button type="button" className="h-[21px] w-[73px] rounded-[3px] border border-[#d0d0d0] bg-[#fdfdfd]">OK</button>
        <button type="button" className="h-[21px] w-[73px] rounded-[3px] border border-[#0078d4] bg-[#fdfdfd]">Hilfe</button>
      </div>
    </div>
  </div>
);

/* ---------- columns ---------- */

const LeftColumn = () => (
  <aside className="flex min-h-0 min-w-0 flex-col gap-1 pb-px">
    <section className="flex min-h-0 flex-1 flex-col border border-l-0 border-[#a0a0a0] bg-white">
      <PanelTitle>Dokumenten-Ansicht</PanelTitle>
      <ul className="min-h-0 flex-1 overflow-hidden whitespace-nowrap">
        {documentTree.map((n) => (
          <TreeRow key={n.label} node={n} />
        ))}
      </ul>
      <div className="flex h-4 shrink-0 items-center bg-[#f0f0f0] pl-[17px]">
        <div className="h-0.5 w-[135px] bg-[#868686]" />
      </div>
    </section>
    <section className="flex h-[268px] shrink-0 flex-col border border-l-0 border-[#a0a0a0] bg-[#f0f0f0]">
      <PanelTitle>Eigenschaften-Ansicht</PanelTitle>
      <div className="flex h-[31px] items-center gap-0.5 pl-0.5">
        <button type="button" aria-label="Kategorien" className="flex h-[19px] w-[22px] items-center justify-center rounded-[2px] border border-[#cce8ff] bg-[#e3f2fc]">
          <Icon name="catView" />
        </button>
        <button type="button" aria-label="Alphabetisch" className="flex w-5 justify-center">
          <Icon name="sortAz" />
        </button>
        <span className="ml-0.5 h-5 w-px bg-[#8c8c8c]" />
        <button type="button" aria-label="Eigenschaftenseiten" className="ml-1">
          <Icon name="propPages" />
        </button>
      </div>
      <div className="h-[153px] bg-white" />
    </section>
  </aside>
);

const CenterColumn = () => (
  <main className="flex min-h-0 min-w-0 flex-col pb-0.5">
    <section className="flex min-h-0 flex-1 flex-col border border-[#a0a0a0] bg-[#f0f0f0]">
      <div className="flex h-6 shrink-0 items-end border-b border-[#a0a0a0] pl-0.5">
        <div role="tab" aria-selected="true" className="-mb-px flex h-5 items-center rounded-tr-[2px] border-t border-r border-[#a0a0a0] bg-white pr-3">
          <svg viewBox="0 0 20 20" className="-mt-px h-5 w-5 shrink-0" aria-hidden="true">
            <path d="M0 0h20L2 20H0z" fill="#f0f0f0" />
            <path d="M1 20L14 3q2-3 6-3" fill="none" stroke="#a0a0a0" />
          </svg>
          <Icon name="frame" />
          <span className="ml-[5px] font-bold">Räumlicher Ra...\Räumlicher Rahmen aus Stahl nur Graphisch.S11</span>
        </div>
        <div className="mb-1 ml-auto flex items-center gap-2 pr-[7px]">
          <svg viewBox="0 0 6 10" className="h-[10px] w-1.5"><path d="M5.500 1v8L1 5z" fill="none" stroke="#111" /></svg>
          <svg viewBox="0 0 6 10" className="h-[10px] w-1.5"><path d="M.5 1v8L5 5z" fill="none" stroke="#111" /></svg>
          <Caret />
          <PinClose pin={false} />
        </div>
      </div>
      <div className="flex h-[35px] shrink-0 items-center bg-gradient-to-b from-[#fdfdfd] to-[#f0f0f0] pl-[5px]">
        <button type="button" className="mr-0.5 flex items-center gap-0.5">
          Keine Arbeitseben <Caret />
        </button>
        {renderTools(["|", "pointer", "orbit", "|", "zoomA", "zoomAOff", "zoom", "pan", "zoomIn", "zoomOut", "zoomPage"])}
        <span className="flex h-[23px] w-[50px] shrink-0 border border-[#ababab] bg-white">
          <input aria-label="Zoomfaktor" defaultValue="29,8" className="w-8 bg-white pl-0.5 outline-none" />
          <span className="flex w-4 flex-col items-center justify-around border-l border-[#d0d0d0] bg-[#f0f0f0] py-0.5">
            <span className="rotate-180"><Caret /></span>
            <Caret />
          </span>
        </span>
        {renderTools(viewTools)}
      </div>
      <div className="flex min-h-0 flex-1">
        <div className="mt-px ml-px min-h-0 min-w-0 flex-1 border border-t-2 border-[#696969] border-r-[#e3e3e3] border-b-[#e3e3e3] bg-white">
          <Model />
        </div>
        <div className="flex w-5 shrink-0 justify-center pl-1">
          <div className="mt-[278px] h-[263px] w-0.5 bg-[#868686]" />
        </div>
      </div>
      <div className="flex h-5 shrink-0 items-center pl-[438px]">
        <div className="h-0.5 w-[459px] bg-[#868686]" />
      </div>
    </section>
    <section className="mt-1 flex h-[51px] shrink-0 flex-col border border-[#a0a0a0] bg-white">
      <PanelTitle>Meldungs-Ansicht</PanelTitle>
      <table className="mt-px h-[23px] w-full table-fixed border border-[#a0a0a0] text-left">
        <thead>
          <tr>
            <th aria-label="Symbol" className="w-6 border-r border-[#e0e0e0]" />
            <th className="w-32 border-r border-[#e0e0e0] pl-[7px] font-normal">Aktion</th>
            <th className="w-[322px] border-r border-[#e0e0e0] pl-[7px] font-normal">Objekt</th>
            <th className="pl-[7px] font-normal">Beschreibung</th>
          </tr>
        </thead>
      </table>
    </section>
    <DockTabs
      tabs={[
        { label: "Meldungs-Ansicht", icon: "msgTab", active: true },
        { label: "Tabellen-Ansicht", icon: "tableTab" },
        { label: "Einwirkungstabellen-Ansicht", icon: "tableTab" },
      ]}
    />
  </main>
);

const RightColumn = () => (
  <aside className="flex min-h-0 min-w-0 flex-col pb-0.5">
    <section className="h-[217px] shrink-0 border border-r-0 border-[#a0a0a0] bg-white">
      <PanelTitle>Auswahlfilter-Ansicht</PanelTitle>
      <div className="flex h-[29px] items-center bg-gradient-to-b from-[#fcfcfc] to-[#f0f0f0] pl-0.5">
        <button type="button" className="flex items-center gap-[3px]"><Icon name="all" /> Alle</button>
        <button type="button" className="ml-2 flex items-center gap-[3px]"><Icon name="none" /> Keiner</button>
      </div>
      <ul>
        {[["Knoten", "ball"], ["Stab", "bar"], ["Stab-Streckeneinwirkung", "barLineLoad"]].map(([label, icon]) => (
          <li key={label} className="flex h-[18px] items-center pl-[3px]">
            <CheckBox id={`filter-${icon}`} on />
            <label htmlFor={`filter-${icon}`} className="flex items-center gap-[5px]">
              <Icon name={icon} />
              {label}
            </label>
          </li>
        ))}
      </ul>
    </section>
    <DockTabs
      tabs={[
        { label: "Auswahl-Ansicht", icon: "lassoTab" },
        { label: "Auswahlfilter-Ansicht", icon: "lassoFilter", active: true },
      ]}
    />
    <section className="mt-[5px] flex h-[217px] shrink-0 flex-col border border-r-0 border-[#a0a0a0] bg-white">
      <PanelTitle>Lastfallfilter-Ansicht</PanelTitle>
      <div className="flex h-[29px] items-center bg-gradient-to-b from-[#fcfcfc] to-[#f0f0f0] pl-[5px]">
        <button type="button">Alle</button>
        <button type="button" className="ml-2.5">Keiner</button>
        <button type="button" className="ml-3.5">&gt;</button>
        <button type="button" className="ml-4">&lt;</button>
      </div>
      <ul className="flex-1">
        {["1 - Ständig (automatisch)", "4 - Wind von rechts", "5 - Schnee bis zu NN +1000"].map((label) => (
          <li key={label} className="flex h-[18px] items-center gap-0.5 pl-[3px]">
            <CheckBox id={label} on />
            <label htmlFor={label}>{label}</label>
          </li>
        ))}
      </ul>
      <div className="relative">
        <select aria-label="Überlagerungsregel" className="block h-[23px] w-full appearance-none border border-[#c8c8c8] bg-white pl-[3px]">
          <option>Überlagerungsregel auswählen</option>
        </select>
        <svg viewBox="0 0 10 6" className="pointer-events-none absolute top-2 right-1 h-1.5 w-[10px]" aria-hidden="true">
          <path d="M1 .5l4 4 4-4" fill="none" stroke="#666" />
        </svg>
      </div>
    </section>
    <DockTabs
      tabs={[
        { label: "Weiterleitungs-Ansicht", icon: "forwardTab" },
        { label: "Lastfallfilter-Ansicht", icon: "caseTab", active: true },
      ]}
    />
    <section className="mt-[5px] flex min-h-0 flex-1 flex-col border border-r-0 border-[#a0a0a0] bg-[#f0f0f0]">
      <PanelTitle>Projekt-Ansicht</PanelTitle>
      <div className="flex h-9 shrink-0 items-center bg-gradient-to-b from-[#fcfcfc] to-[#f0f0f0]">
        {renderTools(["exportOff", "|", "newDoc", "newFolder", "saveAll", "|", "copyDocs", "refreshWin", "|", "sortArrows-"])}
      </div>
      <div className="flex min-h-0 flex-1">
        <ul className="min-w-0 flex-1 overflow-hidden bg-white whitespace-nowrap">
          {projectTree.map((n, i) => (
            <TreeRow key={i} node={n} />
          ))}
        </ul>
        <div className="flex w-4 shrink-0 justify-center">
          <div className="mt-[26px] h-[195px] w-0.5 bg-[#868686]" />
        </div>
      </div>
      <div className="flex h-4 shrink-0 items-center pl-[17px]">
        <div className="h-0.5 w-[217px] bg-[#868686]" />
      </div>
    </section>
    <DockTabs
      tabs={[
        { label: "Projekt-Ansicht", icon: "projTab", active: true },
        { label: "Sichtbarkeits-Ansicht", icon: "checkTab" },
      ]}
    />
  </aside>
);

export default function App() {
  return (
    <div className="flex h-screen flex-col overflow-hidden bg-gradient-to-r from-[#f0f0f0] to-[#fdfdfd] font-['Roboto',sans-serif] text-xs text-black">
      <header className="flex h-[22px] shrink-0 items-center bg-[#f3f3f3] pl-0.5">
        <Icon name="app" />
        <h1 className="ml-1 flex-1">Beispielprojekt - Baustatik</h1>
        <button type="button" aria-label="Minimieren" className="flex w-[46px] justify-center">
          <svg viewBox="0 0 10 10" className="size-[10px]"><path d="M0 5.500h10" stroke="#000" /></svg>
        </button>
        <button type="button" aria-label="Wiederherstellen" className="flex w-[46px] justify-center">
          <svg viewBox="0 0 10 10" className="size-[10px]">
            <path d="M.5 2.500h7v7h-7zM2.500 2V1.500l1-1h5l1 1v5l-1 1H8" fill="none" stroke="#000" />
          </svg>
        </button>
        <button type="button" aria-label="Schließen" className="flex w-[46px] justify-center">
          <svg viewBox="0 0 10 10" className="size-[10px]"><path d="M0 0l10 10M10 0L0 10" stroke="#000" /></svg>
        </button>
      </header>
      <nav className="flex h-6 shrink-0 items-center pl-[5px]">
        {menus.map((m) => (
          <button key={m} type="button" className="px-[9px]">{m}</button>
        ))}
      </nav>
      <div className="mb-0.5 flex h-[33px] shrink-0">
        <div className="flex items-center rounded-r-[3px] border-r border-[#d0d0d0] bg-gradient-to-b from-[#fdfdfd] to-[#f0f0f0] pl-0.5">
          {renderTools(mainTools)}
        </div>
      </div>
      <div className="grid min-h-0 flex-1 grid-cols-[220px_minmax(0,1fr)_335px] gap-x-1">
        <LeftColumn />
        <CenterColumn />
        <RightColumn />
      </div>
      <footer className="flex h-5 shrink-0 items-center">
        <Icon name="clock" />
      </footer>
      <CheckbotDialog />
    </div>
  );
}
